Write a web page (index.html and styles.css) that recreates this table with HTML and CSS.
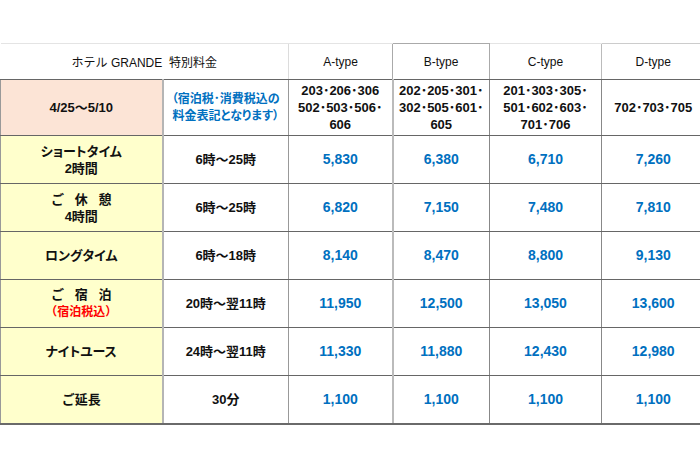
FILE: index.html
```html
<!DOCTYPE html>
<html lang="ja">
<head>
<meta charset="utf-8">
<link rel="stylesheet" href="styles.css">
</head>
<body>
<div class="page">
<table class="rates">
  <colgroup>
    <col class="c1"><col class="c2"><col class="c3"><col class="c4"><col class="c5"><col class="c6">
  </colgroup>
  <thead>
    <tr class="head">
      <th colspan="2" class="title">ホテル GRANDE&nbsp;&nbsp;特別料金</th>
      <th class="ta">A-type</th>
      <th class="tb">B-type</th>
      <th class="tc">C-type</th>
      <th class="td">D-type</th>
    </tr>
  </thead>
  <tbody>
    <tr class="daterow">
      <td class="date">4/25〜5/10</td>
      <td class="note">（宿泊税･消費税込の<br>料金表記となります）</td>
      <td class="rooms">203･206･306<br>502･503･506･<br>606</td>
      <td class="rooms">202･205･301･<br>302･505･601･<br>605</td>
      <td class="rooms">201･303･305･<br>501･602･603･<br>701･706</td>
      <td class="rooms">702･703･705</td>
    </tr>
    <tr>
      <td class="plan"><span class="kana">ショートタイム</span><br>2時間</td>
      <td class="time">6時～25時</td>
      <td class="price">5,830</td><td class="price">6,380</td><td class="price">6,710</td><td class="price">7,260</td>
    </tr>
    <tr>
      <td class="plan">ご&nbsp;&nbsp;&nbsp;休&nbsp;&nbsp;&nbsp;憩<br>4時間</td>
      <td class="time">6時～25時</td>
      <td class="price">6,820</td><td class="price">7,150</td><td class="price">7,480</td><td class="price">7,810</td>
    </tr>
    <tr>
      <td class="plan"><span class="kana">ロングタイム</span></td>
      <td class="time">6時～18時</td>
      <td class="price">8,140</td><td class="price">8,470</td><td class="price">8,800</td><td class="price">9,130</td>
    </tr>
    <tr>
      <td class="plan">ご&nbsp;&nbsp;&nbsp;宿&nbsp;&nbsp;&nbsp;泊<br><span class="red">（宿泊税込）</span></td>
      <td class="time">20時～翌11時</td>
      <td class="price">11,950</td><td class="price">12,500</td><td class="price">13,050</td><td class="price">13,600</td>
    </tr>
    <tr>
      <td class="plan"><span class="kana">ナイトユース</span></td>
      <td class="time">24時～翌11時</td>
      <td class="price">11,330</td><td class="price">11,880</td><td class="price">12,430</td><td class="price">12,980</td>
    </tr>
    <tr class="last">
      <td class="plan">ご延長</td>
      <td class="time">30分</td>
      <td class="price">1,100</td><td class="price">1,100</td><td class="price">1,100</td><td class="price">1,100</td>
    </tr>
  </tbody>
</table>
</div>
</body>
</html>
```

FILE: styles.css
```css
html, body {
  margin: 0;
  padding: 0;
  background: #ffffff;
  overflow: hidden;
}
.page {
  width: 700px;
  height: 466px;
  overflow: hidden;
  padding-top: 43px;
  box-sizing: border-box;
}
.rates {
  border-collapse: collapse;
  table-layout: fixed;
  width: 704px;
  font-family: "Liberation Sans", "Noto Sans CJK JP", sans-serif;
  color: #111;
}
.c1 { width: 162px; }
.c2 { width: 126px; }
.c3 { width: 104px; }
.c4 { width: 97px; }
.c5 { width: 112px; }
.c6 { width: 103px; }

.rates th, .rates td {
  padding: 0;
  text-align: center;
  vertical-align: middle;
  white-space: nowrap;
}
.head th {
  height: 35px;
  font-weight: normal;
  font-size: 12px;
  border-top: 1px solid #e4e4e4;
  border-left: 1px solid #dcdcdc;
  border-bottom: 1px solid #666;
}
.head .title {
  font-size: 12px;
  border-left: none;
}
.head .tb {
  border-top: 1px solid #aaa;
  border-left: 1px solid #aaa;
  border-right: 1px solid #aaa;
}
.head .td {
  border-top: 1px solid #ccc;
  border-left: 1px solid #bbb;
}

.rates tbody td {
  height: 47px;
  border-bottom: 1px solid #666;
  border-left: 1px solid #888;
  font-weight: bold;
  font-size: 13px;
  line-height: 17px;
}
.rates tbody td:first-child {
  border-left: 1px solid #999;
}
.rates tbody td:nth-child(2) {
  border-left: 2px solid #b5b5b5;
}
.rates tbody td:nth-child(3) {
  border-left: 1px solid #999;
}
.rates tbody td:nth-child(4) {
  border-left: 2px solid #bbb;
}
.rates tbody tr.daterow td {
  height: 55px;
}
.rates tbody tr.last td {
  border-bottom: 2px solid #6a6a6a;
}
.date {
  background: #fce4d6;
  font-size: 15px;
}
.rates tbody td.note {
  color: #0070c0;
  font-size: 12px;
  font-feature-settings: "palt";
}
.rooms {
  font-size: 13px;
}
.plan {
  background: #ffffcc;
  font-size: 13px;
}
.kana {
  font-feature-settings: "palt";
}
.red {
  color: #ff0000;
  font-size: 12px;
}
.time {
  font-size: 13px;
}
.rates tbody td.price {
  color: #0070c0;
  font-size: 14px;
}
```
